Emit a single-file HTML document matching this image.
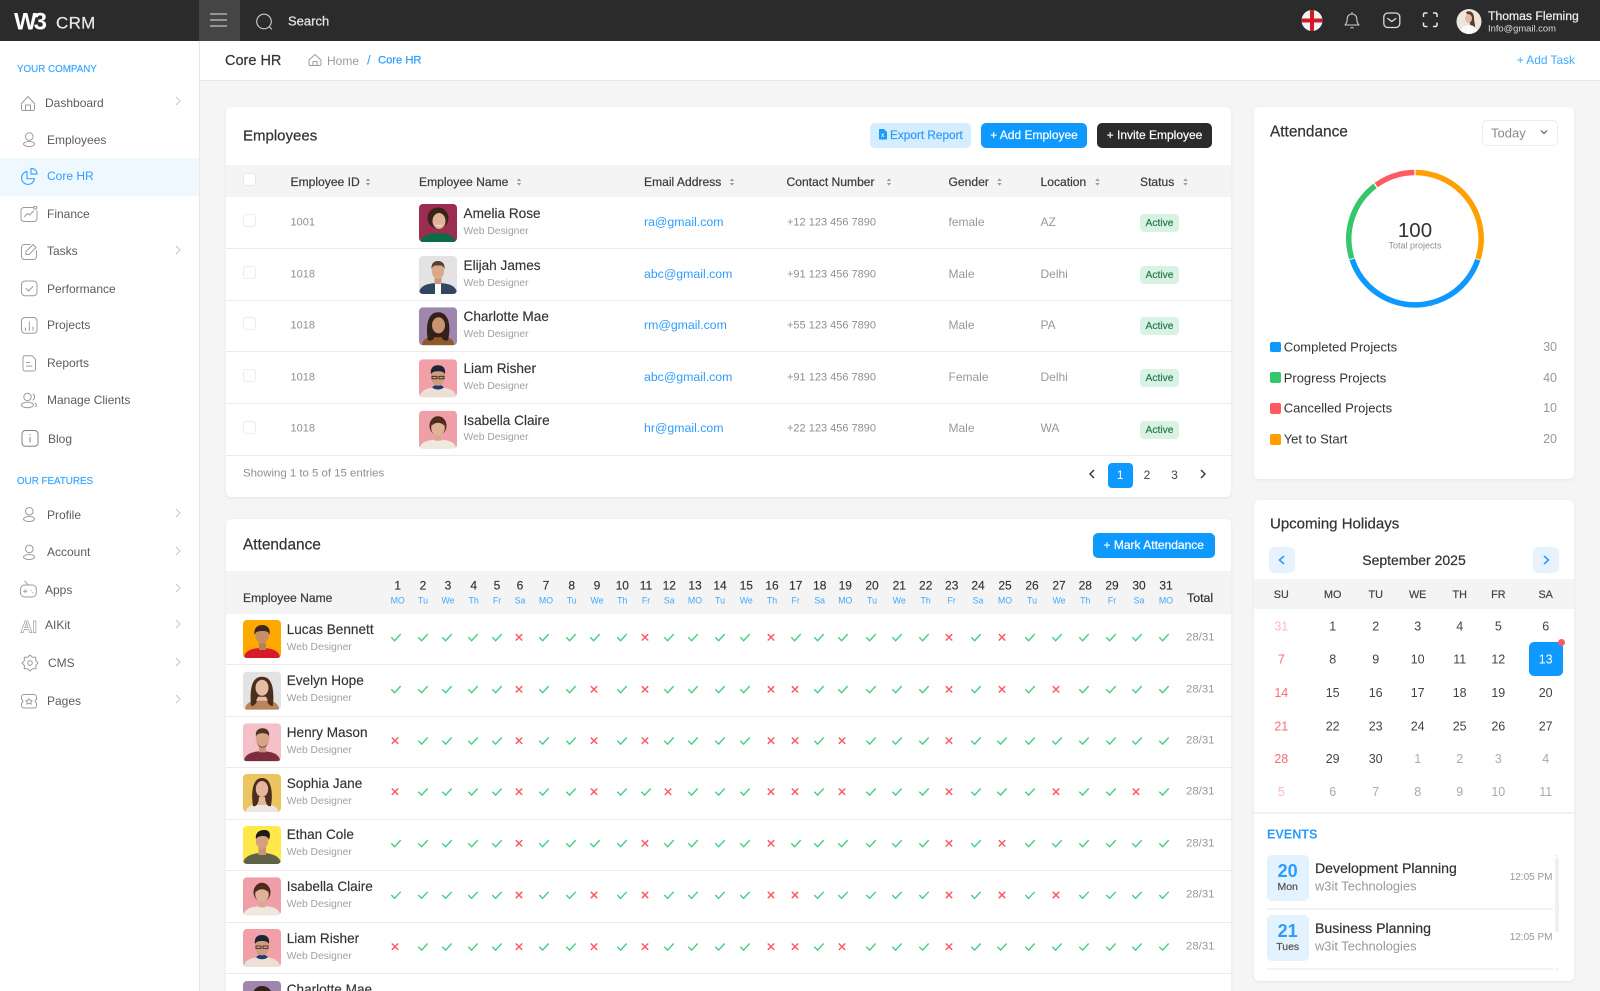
<!DOCTYPE html>
<html lang="en">
<head>
<meta charset="utf-8">
<title>Core HR</title>
<style>
html,body{margin:0;padding:0;width:1600px;height:991px;overflow:hidden;background:#f5f5f5}
#p{position:relative;width:1600px;height:991px;overflow:hidden;background:#f5f5f5;font-family:"Liberation Sans",sans-serif;color:#333;filter:blur(.25px)}
.b{position:absolute;box-sizing:border-box}
.t,.c,.r{position:absolute;white-space:nowrap;line-height:1}
.t{transform:translateY(-50%)}
.c{transform:translate(-50%,-50%)}
.r{transform:translate(-100%,-50%)}
.m{-webkit-text-stroke:.22px currentColor}
.card{position:absolute;background:#fff;border-radius:5px;box-shadow:0 1px 3px rgba(0,0,0,.07)}
.s{font-size:12px;color:#5c5c5c}
.th{font-size:12.1px;color:#3c3c3c}
.g{color:#8f8f8f;font-size:11px;margin-top:1px}
.n{font-size:13.6px;color:#333;margin-top:.7px;-webkit-text-stroke:.14px currentColor}
.d{font-size:10.3px;color:#a0a0a0;margin-top:1px}
.e{font-size:12.3px;color:#2d9cff}
.k{font-size:12px;color:#999}
.tt{font-size:11.4px;color:#999}
.badge{position:absolute;left:1140px;width:39px;height:18px;border-radius:4px;background:#d8f3e3;color:#2c7a50;font-size:10.3px;line-height:19px;text-align:center;-webkit-text-stroke:.2px currentColor}
.cb{position:absolute;left:243px;width:13px;height:13px;border:1px solid #ececec;border-radius:3px;background:#fff;box-sizing:border-box}
.line{position:absolute;height:1px;background:#ebebeb}
.btn{position:absolute;border-radius:5px;text-align:center;font-size:12px;-webkit-text-stroke:.2px currentColor}
svg text{font-family:"Liberation Sans",sans-serif}
#ov{position:absolute;left:0;top:0;width:1600px;height:991px;pointer-events:none}
.ic{fill:none;stroke:#9c9c9c;stroke-width:1;stroke-linecap:round;stroke-linejoin:round}
.wh{fill:none;stroke:#cfcfcf;stroke-width:1.1;stroke-linecap:round;stroke-linejoin:round}
</style>
</head>
<body>
<div id="p">

<!-- header -->
<div class="b" style="left:0;top:0;width:1600px;height:41px;background:#2b2b2b"></div>
<div class="b" style="left:199px;top:0;width:41px;height:41px;background:#454545"></div>
<div class="t m" style="left:56px;top:22.5px;font-size:17px;color:#e8e8e8;letter-spacing:.3px">CRM</div>
<div class="t m" style="left:288px;top:20.5px;font-size:13px;color:#e6e6e6">Search</div>
<div class="t m" style="left:1488px;top:15.5px;font-size:12.2px;color:#f0f0f0">Thomas Fleming</div>
<div class="t" style="left:1488px;top:28px;font-size:9.4px;color:#dcdcdc">Info@gmail.com</div>

<!-- sidebar -->
<div class="b" style="left:0;top:41px;width:200px;height:950px;background:#fff;border-right:1px solid #e8e8e8"></div>
<div class="b" style="left:0;top:158px;width:199px;height:38px;background:#f0f8ff"></div>
<div class="t m" style="left:17px;top:70px;font-size:9.8px;color:#3fa9ff">YOUR COMPANY</div>
<div class="t s" style="left:45px;top:103px">Dashboard</div>
<div class="t s" style="left:47px;top:139.5px">Employees</div>
<div class="t s" style="left:47px;top:176px;color:#2d9cff">Core HR</div>
<div class="t s" style="left:47px;top:213.5px">Finance</div>
<div class="t s" style="left:47px;top:251px">Tasks</div>
<div class="t s" style="left:47px;top:288.5px">Performance</div>
<div class="t s" style="left:47px;top:325px">Projects</div>
<div class="t s" style="left:47px;top:363px">Reports</div>
<div class="t s" style="left:47px;top:400px">Manage Clients</div>
<div class="t s" style="left:48px;top:439px">Blog</div>
<div class="t m" style="left:17px;top:481.5px;font-size:9.8px;color:#3fa9ff">OUR FEATURES</div>
<div class="t s" style="left:47px;top:514.5px">Profile</div>
<div class="t s" style="left:47px;top:552px">Account</div>
<div class="t s" style="left:45px;top:589.5px">Apps</div>
<div class="t s" style="left:45px;top:625px">AIKit</div>
<div class="t s" style="left:48px;top:663px">CMS</div>
<div class="t s" style="left:47px;top:701px">Pages</div>

<!-- sub header -->
<div class="b" style="left:200px;top:41px;width:1400px;height:40px;background:#fff;border-bottom:1px solid #e8e8e8"></div>
<div class="t m" style="left:225px;top:61px;font-size:14.5px;color:#333">Core HR</div>
<div class="t" style="left:327px;top:60.5px;font-size:12px;color:#9a9a9a">Home</div>
<div class="t" style="left:367px;top:60px;font-size:13px;color:#2d9cff">/</div>
<div class="t m" style="left:378px;top:60.5px;font-size:11.2px;color:#2d9cff">Core HR</div>
<div class="r" style="left:1575px;top:60.5px;font-size:11.9px;color:#3fa9ff">+ Add Task</div>

<!-- employees card -->
<div class="card" style="left:226px;top:107px;width:1005px;height:390px"></div>
<div class="t m" style="left:243px;top:136px;font-size:15px;color:#333">Employees</div>
<div class="btn" style="left:870px;top:123px;width:101px;height:25px;line-height:25px;background:#d6ecff;color:#2d9cff;text-align:left;padding-left:20px;box-sizing:border-box;font-size:11.8px">Export Report</div>
<div class="btn" style="left:981px;top:123px;width:106px;height:25px;line-height:25px;background:#0d99ff;color:#fff">+ Add Employee</div>
<div class="btn" style="left:1097px;top:123px;width:115px;height:25px;line-height:25px;background:#2b2b2b;color:#fff">+ Invite Employee</div>

<div class="b" style="left:226px;top:165px;width:1005px;height:32px;background:#f4f4f4"></div>
<div class="cb" style="top:173px;border-color:#e8e8e8"></div>
<div class="t th m" style="left:290.5px;top:182px">Employee ID</div>
<div class="t th m" style="left:419px;top:182px">Employee Name</div>
<div class="t th m" style="left:644px;top:182px">Email Address</div>
<div class="t th m" style="left:786.5px;top:182px">Contact Number</div>
<div class="t th m" style="left:948.5px;top:182px">Gender</div>
<div class="t th m" style="left:1040.5px;top:182px">Location</div>
<div class="t th m" style="left:1140px;top:182px">Status</div>

<div class="line" style="left:226px;top:248px;width:1005px"></div>
<div class="line" style="left:226px;top:300px;width:1005px"></div>
<div class="line" style="left:226px;top:351px;width:1005px"></div>
<div class="line" style="left:226px;top:403px;width:1005px"></div>
<div class="line" style="left:226px;top:455px;width:1005px"></div>

<div class="cb" style="top:214px"></div>
<div class="t g" style="left:290.5px;top:222px">1001</div>
<div class="t n" style="left:463.5px;top:213px">Amelia Rose</div>
<div class="t d" style="left:463.5px;top:230.7px">Web Designer</div>
<div class="t e" style="left:644px;top:222px">ra@gmail.com</div>
<div class="t g" style="left:787px;top:222px">+12 123 456 7890</div>
<div class="t k" style="left:948.5px;top:222px">female</div>
<div class="t k" style="left:1040.5px;top:222px">AZ</div>
<div class="badge" style="top:214px">Active</div>

<div class="cb" style="top:266px"></div>
<div class="t g" style="left:290.5px;top:273.7px">1018</div>
<div class="t n" style="left:463.5px;top:265px">Elijah James</div>
<div class="t d" style="left:463.5px;top:282.7px">Web Designer</div>
<div class="t e" style="left:644px;top:273.7px">abc@gmail.com</div>
<div class="t g" style="left:787px;top:273.7px">+91 123 456 7890</div>
<div class="t k" style="left:948.5px;top:273.7px">Male</div>
<div class="t k" style="left:1040.5px;top:273.7px">Delhi</div>
<div class="badge" style="top:266px">Active</div>

<div class="cb" style="top:317px"></div>
<div class="t g" style="left:290.5px;top:325px">1018</div>
<div class="t n" style="left:463.5px;top:316.7px">Charlotte Mae</div>
<div class="t d" style="left:463.5px;top:334px">Web Designer</div>
<div class="t e" style="left:644px;top:325px">rm@gmail.com</div>
<div class="t g" style="left:787px;top:325px">+55 123 456 7890</div>
<div class="t k" style="left:948.5px;top:325px">Male</div>
<div class="t k" style="left:1040.5px;top:325px">PA</div>
<div class="badge" style="top:317px">Active</div>

<div class="cb" style="top:369px"></div>
<div class="t g" style="left:290.5px;top:376.7px">1018</div>
<div class="t n" style="left:463.5px;top:368.3px">Liam Risher</div>
<div class="t d" style="left:463.5px;top:385.7px">Web Designer</div>
<div class="t e" style="left:644px;top:376.7px">abc@gmail.com</div>
<div class="t g" style="left:787px;top:376.7px">+91 123 456 7890</div>
<div class="t k" style="left:948.5px;top:376.7px">Female</div>
<div class="t k" style="left:1040.5px;top:376.7px">Delhi</div>
<div class="badge" style="top:369px">Active</div>

<div class="cb" style="top:421px"></div>
<div class="t g" style="left:290.5px;top:428.3px">1018</div>
<div class="t n" style="left:463.5px;top:420px">Isabella Claire</div>
<div class="t d" style="left:463.5px;top:437.3px">Web Designer</div>
<div class="t e" style="left:644px;top:428.3px">hr@gmail.com</div>
<div class="t g" style="left:787px;top:428.3px">+22 123 456 7890</div>
<div class="t k" style="left:948.5px;top:428.3px">Male</div>
<div class="t k" style="left:1040.5px;top:428.3px">WA</div>
<div class="badge" style="top:421px">Active</div>

<div class="t" style="left:243px;top:474px;font-size:11.4px;color:#8f8f8f">Showing 1 to 5 of 15 entries</div>
<div class="b" style="left:1107.5px;top:462.5px;width:25.5px;height:25px;border-radius:4px;background:#0d99ff;color:#fff;font-size:12px;line-height:25px;text-align:center">1</div>
<div class="c" style="left:1147px;top:474.5px;font-size:12px;color:#444">2</div>
<div class="c" style="left:1174.5px;top:474.5px;font-size:12px;color:#444">3</div>

<!-- attendance card -->
<div class="card" style="left:226px;top:518.5px;width:1005px;height:490px"></div>
<div class="t m" style="left:243px;top:544.5px;font-size:15.4px;color:#333">Attendance</div>
<div class="btn" style="left:1092.5px;top:532.5px;width:122.5px;height:25px;line-height:25px;background:#0d99ff;color:#fff">+ Mark Attendance</div>
<div class="b" style="left:226px;top:571px;width:1005px;height:42.5px;background:#f4f4f4"></div>
<div class="t th m" style="left:243px;top:598px">Employee Name</div>
<div class="t m" style="left:1187px;top:598px;font-size:12.4px;color:#333">Total</div>

<div class="t n" style="left:286.7px;top:629px">Lucas Bennett</div><div class="t d" style="left:286.7px;top:646.7px">Web Designer</div>
<div class="t n" style="left:286.7px;top:680.7px">Evelyn Hope</div><div class="t d" style="left:286.7px;top:698.3px">Web Designer</div>
<div class="t n" style="left:286.7px;top:732.3px">Henry Mason</div><div class="t d" style="left:286.7px;top:750px">Web Designer</div>
<div class="t n" style="left:286.7px;top:783px">Sophia Jane</div><div class="t d" style="left:286.7px;top:800.7px">Web Designer</div>
<div class="t n" style="left:286.7px;top:834.7px">Ethan Cole</div><div class="t d" style="left:286.7px;top:852.3px">Web Designer</div>
<div class="t n" style="left:286.7px;top:886.3px">Isabella Claire</div><div class="t d" style="left:286.7px;top:904px">Web Designer</div>
<div class="t n" style="left:286.7px;top:938px">Liam Risher</div><div class="t d" style="left:286.7px;top:955.7px">Web Designer</div>
<div class="t n" style="left:286.7px;top:989.5px">Charlotte Mae</div>

<div class="line" style="left:226px;top:664px;width:1005px"></div>
<div class="line" style="left:226px;top:716px;width:1005px"></div>
<div class="line" style="left:226px;top:767px;width:1005px"></div>
<div class="line" style="left:226px;top:818.5px;width:1005px"></div>
<div class="line" style="left:226px;top:870px;width:1005px"></div>
<div class="line" style="left:226px;top:922px;width:1005px"></div>
<div class="line" style="left:226px;top:973px;width:1005px"></div>

<div class="r tt" style="left:1214.5px;top:637.5px">28/31</div>
<div class="r tt" style="left:1214.5px;top:689.5px">28/31</div>
<div class="r tt" style="left:1214.5px;top:741px">28/31</div>
<div class="r tt" style="left:1214.5px;top:792px">28/31</div>
<div class="r tt" style="left:1214.5px;top:843.5px">28/31</div>
<div class="r tt" style="left:1214.5px;top:895px">28/31</div>
<div class="r tt" style="left:1214.5px;top:947px">28/31</div>

<!-- right attendance card -->
<div class="card" style="left:1253.5px;top:107px;width:320.5px;height:372px"></div>
<div class="t m" style="left:1270px;top:132px;font-size:15.4px;color:#333">Attendance</div>
<div class="b" style="left:1482px;top:120px;width:76px;height:26px;border:1px solid #ececec;border-radius:5px;background:#fff"></div>
<div class="t" style="left:1491px;top:132.5px;font-size:13px;color:#8a8a8a">Today</div>
<div class="c" style="left:1415px;top:231px;font-size:20.5px;color:#333">100</div>
<div class="c" style="left:1415px;top:246px;font-size:9px;color:#8f8f8f">Total projects</div>

<div class="b" style="left:1270px;top:341.5px;width:10.5px;height:10.5px;border-radius:2px;background:#0d99ff"></div>
<div class="b" style="left:1270px;top:372px;width:10.5px;height:10.5px;border-radius:2px;background:#36c76c"></div>
<div class="b" style="left:1270px;top:403px;width:10.5px;height:10.5px;border-radius:2px;background:#ff5a5f"></div>
<div class="b" style="left:1270px;top:434px;width:10.5px;height:10.5px;border-radius:2px;background:#ff9f00"></div>
<div class="t" style="left:1283.7px;top:346.7px;font-size:13px;color:#333">Completed Projects</div>
<div class="t" style="left:1283.7px;top:377.7px;font-size:13px;color:#333">Progress Projects</div>
<div class="t" style="left:1283.7px;top:408.3px;font-size:13px;color:#333">Cancelled Projects</div>
<div class="t" style="left:1283.7px;top:439px;font-size:13px;color:#333">Yet to Start</div>
<div class="r" style="left:1557px;top:346.7px;font-size:12.5px;color:#999">30</div>
<div class="r" style="left:1557px;top:377.7px;font-size:12.5px;color:#999">40</div>
<div class="r" style="left:1557px;top:408.3px;font-size:12.5px;color:#999">10</div>
<div class="r" style="left:1557px;top:439px;font-size:12.5px;color:#999">20</div>

<!-- holidays card -->
<div class="card" style="left:1253.5px;top:500px;width:320.5px;height:481px"></div>
<div class="t m" style="left:1270px;top:523.7px;font-size:15px;color:#333">Upcoming Holidays</div>
<div class="b" style="left:1268.5px;top:546.7px;width:26.5px;height:26.5px;border-radius:5px;background:#e6f3ff"></div>
<div class="b" style="left:1532.7px;top:546.7px;width:26.5px;height:26.5px;border-radius:5px;background:#e6f3ff"></div>
<div class="c m" style="left:1414px;top:560px;font-size:14px;color:#333">September 2025</div>
<div class="b" style="left:1253.5px;top:579px;width:320.5px;height:30px;background:#f4f4f4"></div>
<div class="b" style="left:1529px;top:642px;width:33.7px;height:33.7px;border-radius:5px;background:#0d99ff"></div>
<div class="b" style="left:1557.5px;top:639px;width:7px;height:7px;border-radius:50%;background:#ff5a5f"></div>
<div class="b" style="left:1253.5px;top:812px;width:320.5px;height:2px;background:#f2f2f2"></div>
<div class="t" style="left:1267px;top:834.7px;font-size:12.6px;font-weight:bold;color:#2d9cff">EVENTS</div>

<div class="b" style="left:1267px;top:855px;width:41.5px;height:46px;border-radius:5px;background:#e3f2ff"></div>
<div class="c" style="left:1287.7px;top:870.5px;font-size:18px;font-weight:bold;color:#2d9cff">20</div>
<div class="c m" style="left:1287.7px;top:887.3px;font-size:10.5px;color:#555">Mon</div>
<div class="t m" style="left:1315px;top:867.5px;font-size:14.1px;color:#333">Development Planning</div>
<div class="t" style="left:1315px;top:887px;font-size:12.9px;color:#999">w3it Technologies</div>
<div class="r" style="left:1552.5px;top:877.5px;font-size:10px;color:#999">12:05 PM</div>
<div class="b" style="left:1267px;top:907.5px;width:286px;height:2px;background:#f2f2f2"></div>

<div class="b" style="left:1267px;top:915px;width:41.5px;height:46px;border-radius:5px;background:#e3f2ff"></div>
<div class="c" style="left:1287.7px;top:930.5px;font-size:18px;font-weight:bold;color:#2d9cff">21</div>
<div class="c m" style="left:1287.7px;top:947.3px;font-size:10.5px;color:#555">Tues</div>
<div class="t m" style="left:1315px;top:927.5px;font-size:14.1px;color:#333">Business Planning</div>
<div class="t" style="left:1315px;top:947px;font-size:12.9px;color:#999">w3it Technologies</div>
<div class="r" style="left:1552.5px;top:937.5px;font-size:10px;color:#999">12:05 PM</div>
<div class="b" style="left:1267px;top:967.5px;width:286px;height:2px;background:#f2f2f2"></div>
<div class="b" style="left:1554.5px;top:858px;width:4.5px;height:74px;border-radius:2px;background:#eef1f3"></div>

<svg id="ov" viewBox="0 0 1600 991" xmlns="http://www.w3.org/2000/svg">
<defs>
  <path id="sort" d="M-2.2-1 0-3.6 2.2-1zM-2.2 1 0 3.6 2.2 1z" fill="#9a9a9a"/>
  <path id="chev" d="M-2-4 2 0-2 4" fill="none" stroke="#c6c6c6" stroke-width="1"/>
  <path id="k" d="M-4.7 0-1.4 3.4 4.7-3.2" fill="none" stroke="#45cf83" stroke-width="1.4"/>
  <g id="x"><rect x="-6" y="-6" width="12" height="12" fill="#fff"/><path d="M-3.2-3.2 3.2 3.2M3.2-3.2-3.2 3.2" fill="none" stroke="#ff5a5f" stroke-width="1.5"/></g>
  <g id="base">
    <use href="#k" x="396"/><use href="#k" x="423"/><use href="#k" x="447"/><use href="#k" x="473"/><use href="#k" x="497"/><use href="#k" x="520"/><use href="#k" x="544"/><use href="#k" x="571"/><use href="#k" x="595"/><use href="#k" x="622"/><use href="#k" x="646"/><use href="#k" x="669"/><use href="#k" x="693"/><use href="#k" x="720"/><use href="#k" x="745"/><use href="#k" x="771"/><use href="#k" x="796"/><use href="#k" x="819"/><use href="#k" x="843"/><use href="#k" x="871"/><use href="#k" x="897"/><use href="#k" x="924"/><use href="#k" x="949"/><use href="#k" x="976"/><use href="#k" x="1002"/><use href="#k" x="1030"/><use href="#k" x="1057"/><use href="#k" x="1084"/><use href="#k" x="1111"/><use href="#k" x="1137"/><use href="#k" x="1164"/>
  </g>
  <g id="r1"><use href="#base"/><use href="#x" x="519"/><use href="#x" x="645"/><use href="#x" x="771"/><use href="#x" x="949"/><use href="#x" x="1002"/></g>
  <g id="r2"><use href="#base"/><use href="#x" x="519"/><use href="#x" x="594"/><use href="#x" x="645"/><use href="#x" x="771"/><use href="#x" x="795"/><use href="#x" x="949"/><use href="#x" x="1002"/><use href="#x" x="1056"/></g>
  <g id="r3"><use href="#base"/><use href="#x" x="395"/><use href="#x" x="519"/><use href="#x" x="594"/><use href="#x" x="645"/><use href="#x" x="771"/><use href="#x" x="795"/><use href="#x" x="842"/><use href="#x" x="949"/></g>
  <g id="r4"><use href="#base"/><use href="#x" x="395"/><use href="#x" x="519"/><use href="#x" x="594"/><use href="#x" x="668"/><use href="#x" x="771"/><use href="#x" x="795"/><use href="#x" x="842"/><use href="#x" x="949"/><use href="#x" x="1056"/><use href="#x" x="1136"/></g>

  <clipPath id="rc"><rect width="38" height="38" rx="4"/></clipPath>
  <g id="a1" clip-path="url(#rc)"><rect width="38" height="38" fill="#9c2c50"/><path d="M2 38c0-6 7-9 17-9s17 3 17 9z" fill="#0d6b46"/><ellipse cx="19" cy="14" rx="10.5" ry="10.5" fill="#3a2418"/><ellipse cx="20" cy="17" rx="6.5" ry="8" fill="#e0b19b"/><path d="M16.5 20c2 2 5 2 7 0-1 3-6 3-7 0z" fill="#fff"/></g>
  <g id="a2" clip-path="url(#rc)"><rect width="38" height="38" fill="#e3e3e3"/><path d="M0 38c0-8 8-11 19-11s19 3 19 11z" fill="#33465f"/><path d="M16 27h6v11h-6z" fill="#fff"/><rect x="15.5" y="21" width="7" height="7" fill="#c9977c"/><ellipse cx="19" cy="15" rx="6.2" ry="8" fill="#d9a98d"/><path d="M12.5 13c-.5-6 3-8 6.5-8s7 2 6.5 8c-1-2-2-3.5-4-3.5h-5c-2 0-3 1.500-4 3.500z" fill="#5a3d2b"/></g>
  <g id="a3" clip-path="url(#rc)"><rect width="38" height="38" fill="#9e86ad"/><path d="M3 38c0-7 7-9 16-9s16 2 16 9z" fill="#8e5a2b"/><path d="M9 33c-2-10-2-28 10-28s13 16 10 28c-2 1-6 0-6-3h-8c0 3-4 4-6 3z" fill="#33201a"/><ellipse cx="19.5" cy="18" rx="6.5" ry="8" fill="#c9946f"/></g>
  <g id="a4" clip-path="url(#rc)"><rect width="38" height="38" fill="#f2a0a8"/><path d="M1 38c0-7 8-10 18-10s18 3 18 10z" fill="#ece0d6"/><path d="M13 28c3 3 9 3 12 0l-3-2h-6z" fill="#1a3a78"/><ellipse cx="19" cy="17" rx="7" ry="9.5" fill="#d39a7d"/><path d="M12 15c-1-7 3-9 7-9s8 2 7 9c-1-2-3-3-7-3s-6 1-7 3z" fill="#1c2536"/><path d="M13 17h5v2.5h-5zM20 17h5v2.5h-5z" fill="none" stroke="#222" stroke-width=".8"/></g>
  <g id="a5" clip-path="url(#rc)"><rect width="38" height="38" fill="#ee9fa8"/><path d="M1 38c0-7 8-9 18-9s18 2 18 9z" fill="#efe7e0"/><rect x="16" y="24" width="6" height="6" fill="#dba78f"/><ellipse cx="19" cy="15" rx="8.5" ry="9.5" fill="#4a2a1b"/><ellipse cx="19" cy="17" rx="6.8" ry="8" fill="#e2b199"/><path d="M12.5 15c1-4 3-6 6.5-6s5.5 2 6.5 6c-2-2-4-3-6.5-3s-4.500 1-6.500 3z" fill="#4a2a1b"/></g>
  <g id="a6" clip-path="url(#rc)"><rect width="38" height="38" fill="#ffa800"/><path d="M1 38c0-7 8-10 18-10s18 3 18 10z" fill="#d61a2a"/><rect x="16" y="23" width="7" height="7" fill="#b9805c"/><ellipse cx="19" cy="15" rx="6.8" ry="8.5" fill="#c98d66"/><path d="M11.5 15c-1-8 4-10 8-10s8.500 3 7 10c-1-3-2-4-7-4s-7 1-8 4z" fill="#3a2a1c"/></g>
  <g id="a7" clip-path="url(#rc)"><rect width="38" height="38" fill="#e2e2e2"/><path d="M2 38c0-7 7-10 17-10s17 3 17 10z" fill="#b9855a"/><path d="M8 34C7 22 7 5 19 5s12 17 11 29c-2 1-6-2-6-6H14c0 4-4 7-6 6z" fill="#4b2d1d"/><ellipse cx="19" cy="16" rx="6.5" ry="8" fill="#e6bca5"/><path d="M15 25h8l2 4H13z" fill="#e6bca5"/></g>
  <g id="a8" clip-path="url(#rc)"><rect width="38" height="38" fill="#f5c0c8"/><path d="M1 38c0-7 8-10 18-10s18 3 18 10z" fill="#7a2e3e"/><rect x="16" y="23" width="7" height="6" fill="#c89478"/><ellipse cx="19.5" cy="15" rx="6.8" ry="8.5" fill="#d9a586"/><path d="M13 13c-1-6 3-8 6.5-8s7.5 2 6.5 8c-1-2-3-3-6.5-3s-5.500 1-6.500 3zM14 19c2 6 9 6 11 0-1 7-10 7-11 0z" fill="#4a3427"/></g>
  <g id="a9" clip-path="url(#rc)"><rect width="38" height="38" fill="#ecc55f"/><path d="M3 38c0-6 7-8 16-8s16 2 16 8z" fill="#eee7e1"/><path d="M10 32C8 20 9 4 19 4s11 16 9 28c-2 1-5-1-5-4h-8c0 3-3 5-5 4z" fill="#4a2f20"/><ellipse cx="19" cy="15" rx="6.2" ry="8" fill="#e5b59c"/><path d="M16 23h6l1 8h-8z" fill="#e5b59c"/></g>
  <g id="a10" clip-path="url(#rc)"><rect width="38" height="38" fill="#ffe84a"/><path d="M0 38c0-7 8-11 19-11s19 4 19 11z" fill="#5e6347"/><rect x="15.5" y="21" width="7.5" height="8" fill="#c89472"/><ellipse cx="19" cy="15" rx="6.2" ry="8" fill="#d6a07e"/><path d="M13 13c-1-5 2-9 8-9s7 4 5 10c-1-3-3-4-6-4s-6 1-7 3z" fill="#1e1a18"/></g>
</defs>

<!-- logo -->
<text x="14" y="29.5" font-size="24" font-weight="bold" fill="#fff" letter-spacing="-3">W3</text>

<!-- header icons -->
<path d="M210 14h17M210 20h17M210 26h17" fill="none" stroke="#c2c2c2" stroke-width="1.2"/>
<circle cx="264" cy="21.5" r="7.3" class="wh"/><path d="M269.5 27l2 2" class="wh"/>
<clipPath id="fc"><circle cx="1312" cy="20.5" r="10.5"/></clipPath>
<g clip-path="url(#fc)"><rect x="1300" y="9" width="24" height="24" fill="#f4f4f4"/><rect x="1310" y="9" width="4" height="24" fill="#d4182a"/><rect x="1300" y="18.5" width="24" height="4" fill="#d4182a"/></g>
<path d="M1345 25c1.5-1.500 2.200-2.800 2.200-6.200a4.800 4.800 0 0 1 9.600 0c0 3.400.7 4.700 2.200 6.200zM1350.800 27.800h2.400M1352 12.500v1.500" class="wh"/>
<rect x="1383.800" y="13" width="16" height="14.500" rx="4" fill="none" stroke="#dcdcdc" stroke-width="1.300"/><path d="M1387.800 18.500l4 3 4-3" fill="none" stroke="#dcdcdc" stroke-width="1.300" stroke-linecap="round"/>
<path d="M1423.500 17v-2.500a1.500 1.500 0 0 1 1.500-1.500h2.500M1433 13h2.500a1.500 1.500 0 0 1 1.500 1.500V17M1437 22.500V25a1.500 1.500 0 0 1-1.500 1.500H1433M1427.500 26.500H1425a1.500 1.500 0 0 1-1.500-1.500v-2.500" fill="none" stroke="#e8e8e8" stroke-width="1.500"/>
<clipPath id="tc"><circle cx="1469" cy="21.500" r="12.500"/></clipPath>
<g clip-path="url(#tc)"><rect x="1456" y="9" width="26" height="26" fill="#ece6df"/><path d="M1466 12c4-2 8 0 8 6 0 4 2 9 1 13l-4-3-3-12z" fill="#5b3a28"/><ellipse cx="1468.500" cy="18.500" rx="3.500" ry="4.500" fill="#e3bba3"/><path d="M1460 34c0-6 4-9 9-9s8 3 8 9z" fill="#fbfaf8"/></g>

<!-- sidebar icons -->
<g class="ic">
  <path d="M21.500 103.500 28 96.500l6.500 7v5.500a1.500 1.500 0 0 1-1.500 1.500H23a1.500 1.500 0 0 1-1.500-1.500zM25.500 110.500v-5.500h5v5.500"/>
  <circle cx="29.300" cy="136.500" r="3.800"/><ellipse cx="29" cy="144" rx="5.500" ry="2.500"/>
  <path d="M33 207.500h-9a3 3 0 0 0-3 3v8a3 3 0 0 0 3 3h10a3 3 0 0 0 3-3v-7.500M24.500 216.500l3-3 2 1.500 4-4"/><circle cx="35.300" cy="207.700" r="1.500"/>
  <path d="M30 244.500h-5.500a3 3 0 0 0-3 3v9a3 3 0 0 0 3 3h9a3 3 0 0 0 3-3v-6M26 254.500v-3l7-7 3 3-7 7z"/>
  <rect x="21.500" y="281" width="15.500" height="14.800" rx="3.500"/><path d="M26 288.500l2.500 2.500 4.500-4.500"/>
  <rect x="21.500" y="317.500" width="15.500" height="15.800" rx="3.500"/><path d="M25.500 328v2.500M29.300 322v8.500M33 327v3.500"/>
  <path d="M25 355.700h7l3.500 3.500v9.800a2 2 0 0 1-2 2H25a2 2 0 0 1-2-2v-11.300a2 2 0 0 1 2-2zM26.500 362.500h3M26.500 366h5.500"/>
  <circle cx="27.500" cy="397" r="3.700"/><ellipse cx="27.500" cy="405" rx="6" ry="2.700"/><path d="M33 394a3.500 3.500 0 0 1 0 6M35 403l1.800 2.500-1.200 1.200"/>
  <rect x="22" y="430.500" width="16" height="15.800" rx="3.500" stroke="#808080"/><path d="M30 437.500v4.500M30 434.500v.2" stroke="#808080"/>
  <circle cx="29.300" cy="511.300" r="3.800"/><ellipse cx="29" cy="519" rx="5.500" ry="2.500"/>
  <circle cx="29.300" cy="548.900" r="3.800"/><ellipse cx="29" cy="557" rx="5.500" ry="2.500"/>
  <rect x="20.500" y="585" width="15.800" height="12" rx="4"/><path d="M25 581l3 3.800M23.500 591.300h3.500M25.200 589.800v3M31 590.500v.1M33 592.500v.1"/>
  <path d="M38 663l-2.200 2.400.2 3.300-3.600.1L30 671l-2.400-2.200-3.300-.1.100-3.300L22 663l2.400-2.400-.1-3.300 3.300-.1L30 655l2.400 2.200 3.300.1.100 3.300z"/><circle cx="30" cy="663" r="2.300"/>
  <path d="M24 694.500h10a2.500 2.500 0 0 1 2.500 2.500v2.500a1.800 1.800 0 0 0 0 3.500v2.500a2.500 2.500 0 0 1-2.500 2.500H24a2.500 2.500 0 0 1-2.500-2.500V703a1.800 1.800 0 0 0 0-3.500V697a2.500 2.500 0 0 1 2.500-2.500zM29 698.500l1.200 1.800 2 .4-1.300 1.500.2 2-2.100-.9-2.100.9.2-2-1.300-1.500 2-.4z"/>
</g>
<text x="20.500" y="632.500" font-size="16.500" font-weight="bold" fill="none" stroke="#9c9c9c" stroke-width=".7">AI</text>
<g fill="none" stroke="#3fa9ff" stroke-width="1.200" stroke-linejoin="round"><path d="M27 171.500a6.500 6.500 0 1 0 7.500 7.200h-7.500zM31 168.500a5.500 5.500 0 0 1 6 5.500h-6z"/></g>
<use href="#chev" x="178" y="101"/><use href="#chev" x="178" y="250"/><use href="#chev" x="178" y="513"/><use href="#chev" x="178" y="551"/><use href="#chev" x="178" y="588"/><use href="#chev" x="178" y="624"/><use href="#chev" x="178" y="662"/><use href="#chev" x="178" y="699"/>

<!-- breadcrumb home -->
<path class="ic" d="M309 60l6-5.500 6 5.500v4.500a1 1 0 0 1-1 1h-10a1 1 0 0 1-1-1zM313 65.500v-4h4v4"/>

<!-- export icon -->
<path d="M879 129h5l3 3v7.500H879z" fill="#1a9dff"/><path d="M881.500 133.500l2.500 3.500M884 133.500l-2.500 3.500" stroke="#d6ecff" stroke-width=".8"/>

<!-- sort -->
<use href="#sort" x="368" y="182"/><use href="#sort" x="519" y="182"/><use href="#sort" x="732" y="182"/><use href="#sort" x="889" y="182"/><use href="#sort" x="999.500" y="182"/><use href="#sort" x="1097.500" y="182"/><use href="#sort" x="1185.500" y="182"/>

<!-- pagination chevrons -->
<path d="M1094 470l-4 4 4 4M1201 470l4 4-4 4" fill="none" stroke="#333" stroke-width="1.400"/>

<!-- avatars employees -->
<use href="#a1" x="419" y="204"/><use href="#a2" x="419" y="256"/><use href="#a3" x="419" y="307.300"/><use href="#a4" x="419" y="359.300"/><use href="#a5" x="419" y="410.700"/>
<!-- avatars attendance -->
<use href="#a6" x="243" y="620"/><use href="#a7" x="243" y="671.700"/><use href="#a8" x="243" y="723.300"/><use href="#a9" x="243" y="774"/><use href="#a10" x="243" y="826"/><use href="#a5" x="243" y="877.300"/><use href="#a4" x="243" y="929"/><use href="#a3" x="243" y="981"/>

<!-- header days -->
<g font-size="12" fill="#333" text-anchor="middle" stroke="#333" stroke-width=".15">
<text x="397.700" y="589.300">1</text><text x="423" y="589.300">2</text><text x="448" y="589.300">3</text><text x="473.700" y="589.300">4</text><text x="497" y="589.300">5</text><text x="520" y="589.300">6</text><text x="546" y="589.300">7</text><text x="571.700" y="589.300">8</text><text x="597" y="589.300">9</text><text x="622.300" y="589.300">10</text><text x="646" y="589.300">11</text><text x="669.300" y="589.300">12</text><text x="695" y="589.300">13</text><text x="720" y="589.300">14</text><text x="746.300" y="589.300">15</text><text x="772" y="589.300">16</text><text x="795.700" y="589.300">17</text><text x="819.700" y="589.300">18</text><text x="845.300" y="589.300">19</text><text x="872" y="589.300">20</text><text x="899.300" y="589.300">21</text><text x="925.700" y="589.300">22</text><text x="951.700" y="589.300">23</text><text x="978" y="589.300">24</text><text x="1005" y="589.300">25</text><text x="1032" y="589.300">26</text><text x="1059" y="589.300">27</text><text x="1085.300" y="589.300">28</text><text x="1112" y="589.300">29</text><text x="1139" y="589.300">30</text><text x="1166" y="589.300">31</text>
</g>
<g font-size="8.800" fill="#3fa9ff" text-anchor="middle">
<text x="397.700" y="603.500">MO</text><text x="423" y="603.500">Tu</text><text x="448" y="603.500">We</text><text x="473.700" y="603.500">Th</text><text x="497" y="603.500">Fr</text><text x="520" y="603.500">Sa</text><text x="546" y="603.500">MO</text><text x="571.700" y="603.500">Tu</text><text x="597" y="603.500">We</text><text x="622.300" y="603.500">Th</text><text x="646" y="603.500">Fr</text><text x="669.300" y="603.500">Sa</text><text x="695" y="603.500">MO</text><text x="720" y="603.500">Tu</text><text x="746.300" y="603.500">We</text><text x="772" y="603.500">Th</text><text x="795.700" y="603.500">Fr</text><text x="819.700" y="603.500">Sa</text><text x="845.300" y="603.500">MO</text><text x="872" y="603.500">Tu</text><text x="899.300" y="603.500">We</text><text x="925.700" y="603.500">Th</text><text x="951.700" y="603.500">Fr</text><text x="978" y="603.500">Sa</text><text x="1005" y="603.500">MO</text><text x="1032" y="603.500">Tu</text><text x="1059" y="603.500">We</text><text x="1085.300" y="603.500">Th</text><text x="1112" y="603.500">Fr</text><text x="1139" y="603.500">Sa</text><text x="1166" y="603.500">MO</text>
</g>

<!-- ticks -->
<use href="#r1" y="637.300"/><use href="#r2" y="689.300"/><use href="#r3" y="740.700"/><use href="#r4" y="791.700"/><use href="#r1" y="843.300"/><use href="#r2" y="895"/><use href="#r3" y="946.700"/>

<!-- today chevron -->
<path d="M1541 130.500l3 3 3-3" fill="none" stroke="#555" stroke-width="1.100"/>

<!-- donut -->
<g fill="none" stroke-width="5.500" transform="rotate(-90 1415 238.700)">
  <circle cx="1415" cy="238.700" r="66.200" pathLength="360" stroke="#ff9f00" stroke-dasharray="107 253" transform="rotate(1 1415 238.700)"/>
  <circle cx="1415" cy="238.700" r="66.200" pathLength="360" stroke="#0d99ff" stroke-dasharray="143 217" transform="rotate(109 1415 238.700)"/>
  <circle cx="1415" cy="238.700" r="66.200" pathLength="360" stroke="#36c76c" stroke-dasharray="70 290" transform="rotate(253 1415 238.700)"/>
  <circle cx="1415" cy="238.700" r="66.200" pathLength="360" stroke="#ff5a5f" stroke-dasharray="35 325" transform="rotate(324.500 1415 238.700)"/>
</g>

<!-- calendar nav -->
<path d="M1284 556l-4.500 4 4.500 4" fill="none" stroke="#2d9cff" stroke-width="1.600"/>
<path d="M1544 556l4.500 4-4.500 4" fill="none" stroke="#2d9cff" stroke-width="1.600"/>

<!-- calendar head -->
<g font-size="10.800" fill="#444" text-anchor="middle" stroke="#444" stroke-width=".2">
<text x="1281.300" y="598">SU</text><text x="1332.700" y="598">MO</text><text x="1375.700" y="598">TU</text><text x="1417.700" y="598">WE</text><text x="1459.700" y="598">TH</text><text x="1498.300" y="598">FR</text><text x="1545.700" y="598">SA</text>
</g>
<!-- calendar days -->
<g font-size="12.500" fill="#444" text-anchor="middle">
<text x="1281.300" y="630.300" fill="#ffb9bc">31</text><text x="1332.700" y="630.300">1</text><text x="1375.700" y="630.300">2</text><text x="1417.700" y="630.300">3</text><text x="1459.700" y="630.300">4</text><text x="1498.300" y="630.300">5</text><text x="1545.700" y="630.300">6</text>
<text x="1281.300" y="663.500" fill="#ff6b70">7</text><text x="1332.700" y="663.500">8</text><text x="1375.700" y="663.500">9</text><text x="1417.700" y="663.500">10</text><text x="1459.700" y="663.500">11</text><text x="1498.300" y="663.500">12</text><text x="1545.700" y="663.500" fill="#fff">13</text>
<text x="1281.300" y="697" fill="#ff6b70">14</text><text x="1332.700" y="697">15</text><text x="1375.700" y="697">16</text><text x="1417.700" y="697">17</text><text x="1459.700" y="697">18</text><text x="1498.300" y="697">19</text><text x="1545.700" y="697">20</text>
<text x="1281.300" y="730.300" fill="#ff6b70">21</text><text x="1332.700" y="730.300">22</text><text x="1375.700" y="730.300">23</text><text x="1417.700" y="730.300">24</text><text x="1459.700" y="730.300">25</text><text x="1498.300" y="730.300">26</text><text x="1545.700" y="730.300">27</text>
<text x="1281.300" y="763.200" fill="#ff6b70">28</text><text x="1332.700" y="763.200">29</text><text x="1375.700" y="763.200">30</text><text x="1417.700" y="763.200" fill="#aaa">1</text><text x="1459.700" y="763.200" fill="#aaa">2</text><text x="1498.300" y="763.200" fill="#aaa">3</text><text x="1545.700" y="763.200" fill="#aaa">4</text>
<text x="1281.300" y="796" fill="#ffb9bc">5</text><text x="1332.700" y="796" fill="#aaa">6</text><text x="1375.700" y="796" fill="#aaa">7</text><text x="1417.700" y="796" fill="#aaa">8</text><text x="1459.700" y="796" fill="#aaa">9</text><text x="1498.300" y="796" fill="#aaa">10</text><text x="1545.700" y="796" fill="#aaa">11</text>
</g>
<path d="M1556.800 854.500l-2 2h4zM1556.800 970.500l-2-2h4z" fill="#e8ebee"/>
</svg>
</div>
</body>
</html>
